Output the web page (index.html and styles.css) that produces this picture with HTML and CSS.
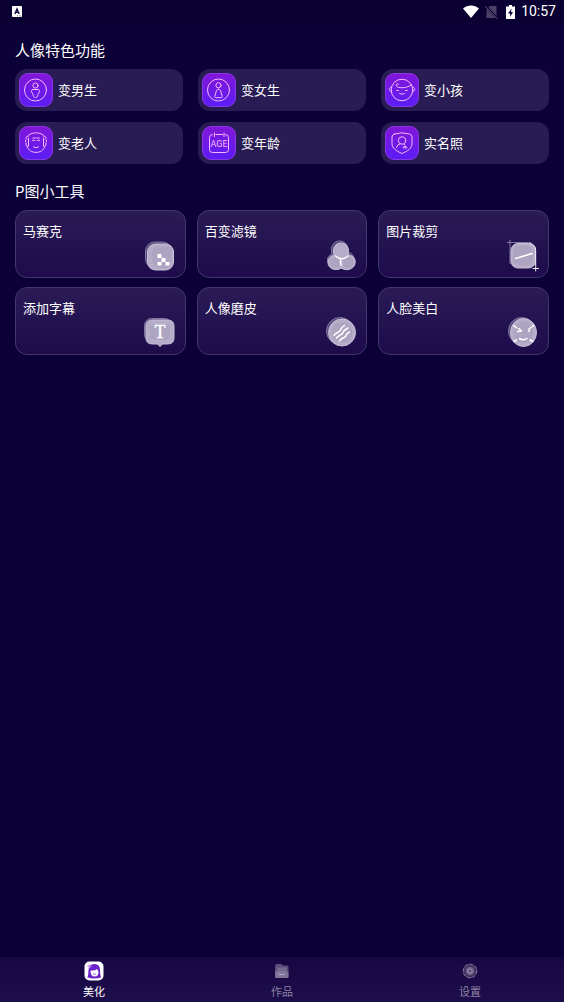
FILE: index.html
```html
<!DOCTYPE html>
<html lang="zh-CN">
<head>
<meta charset="utf-8">
<meta name="viewport" content="width=device-width, initial-scale=1">
<title>美化</title>
<link rel="stylesheet" href="styles.css">
</head>
<body>
<div class="app">
  <header class="status">
    <svg class="status-app" viewBox="0 0 10 11" aria-hidden="true"><rect width="10" height="11" rx="1" fill="#fff"/><path d="M2.800 8 5 3l2.200 5M3.600 6.400h2.800" fill="none" stroke="#0b0136" stroke-width="1.400"/><path d="M5 9.800h1M7.500 9.800h1" stroke="#0b0136" stroke-width=".7"/></svg>
    <div class="status-right">
      <svg class="wifi" viewBox="0 0 16 13" aria-hidden="true"><path d="M0 3.400C4.500-.6 11.500-.6 16 3.400L8 13z" fill="#fff"/></svg>
      <svg class="sim" viewBox="0 0 13 14" aria-hidden="true"><path d="M5 1h6.500v12h-10V4.500z" fill="#4a4169"/><path d="M.5 1 12.500 13.500" stroke="#0b0136" stroke-width="2.400"/><path d="M.5 1.500 12 13.500" stroke="#6a6284" stroke-width="1"/></svg>
      <svg class="battery" viewBox="0 0 9 14" aria-hidden="true"><path d="M3 0h3v1.500h3V14H0V1.500h3z" fill="#fff"/><path d="M5.500 3.500 2 8.400h2.200V12L7 7H5z" fill="#0b0136"/></svg>
      <time class="clock">10:57</time>
    </div>
  </header>

  <main class="content">
    <h2 class="heading">人像特色功能</h2>
    <div class="features">
      <button class="feature" type="button">
        <span class="tile"><svg viewBox="0 0 34 34" aria-hidden="true"><circle cx="16.500" cy="17" r="11"/><circle cx="16.500" cy="12.500" r="2.600"/><path d="M14 16.500h5c1.400 0 1.800 1 1.500 2.200-.3 1.300-1.300 1.600-1.600 3-.2 1.800-1 2.800-2.400 2.800s-2.200-1-2.400-2.800c-.3-1.400-1.300-1.700-1.600-3-.3-1.200.1-2.200 1.500-2.200z"/></svg></span>
        <span>变男生</span>
      </button>
      <button class="feature" type="button">
        <span class="tile"><svg viewBox="0 0 34 34" aria-hidden="true"><circle cx="16.500" cy="17" r="11"/><circle cx="16.500" cy="12.300" r="2.600"/><path d="M16.500 16.300c-1.600 0-2.200 1.200-2.500 2.800l-1.200 4.200c-.2.900.2 1.400 1.200 1.400h5c1 0 1.400-.5 1.200-1.400l-1.200-4.200c-.3-1.600-.9-2.800-2.500-2.800z"/></svg></span>
        <span>变女生</span>
      </button>
      <button class="feature" type="button">
        <span class="tile"><svg viewBox="0 0 34 34" aria-hidden="true"><circle cx="17" cy="17" r="10.800"/><path d="M6.300 14c-2.800.3-2.800 4.200 0 4.500M27.700 14c2.800.3 2.800 4.200 0 4.500M13.500 11.200c-1.500-.8-3 .3-2.200 1.800 1.700 2.600 11.500 2.400 15.200-1.300M11.800 17.500h1.700M20.500 17.500h1.700M14.500 20.500q2.500 1.800 5 0"/></svg></span>
        <span>变小孩</span>
      </button>
      <button class="feature" type="button">
        <span class="tile"><svg viewBox="0 0 34 34" aria-hidden="true"><path d="M8.500 10.500C11 5.500 23 5.500 25.500 10.500M8 20.500c2.500 8 15.500 8 18 0M9.500 12v8M24.500 12v8M9.300 10.200c-2.300 0-3 1.900-1.600 3-1.700.8-1.700 2.800-.4 3.500-1 1.500-.2 3.600 1.600 3.800M24.700 10.200c2.300 0 3 1.900 1.600 3 1.700.8 1.700 2.800.4 3.500 1 1.500.2 3.600-1.600 3.800"/><path d="M13.800 12h2.700M17.700 12h2.700M13.500 14.500q1.200-.8 2.500 0M18.200 14.500q1.200-.8 2.500 0M14.500 21q2.500 1.700 5 0"/></svg></span>
        <span>变老人</span>
      </button>
      <button class="feature" type="button">
        <span class="tile"><svg viewBox="0 0 34 34" aria-hidden="true"><path d="M10.500 8.500Q7.500 8.500 7.500 11.500v12q0 3 3 3h13q3 0 3-3v-12q0-3-3-3M14 8.500h6.500M12.500 7v3.500M22 7v3.500"/><text class="age" x="17" y="21" text-anchor="middle">AGE</text></svg></span>
        <span>变年龄</span>
      </button>
      <button class="feature" type="button">
        <span class="tile"><svg viewBox="0 0 34 34" aria-hidden="true"><path d="M9.500 8Q17 5.500 24.500 8q2.500.7 2.500 3v6.500c0 5-4.500 7.500-10 10-5.500-2.500-10-5-10-10V11q0-2.300 2.500-3z"/><circle cx="17" cy="14.500" r="3.700"/><path d="M11.500 21.500q.5-3.300 3.500-3.600M19 18l1 1M19 20.500h2M18 21.800h4"/></svg></span>
        <span>实名照</span>
      </button>
    </div>

    <h2 class="heading heading-tools">P图小工具</h2>
    <div class="tools">
      <button class="tool" type="button">
        <span>马赛克</span>
        <svg class="tool-icon" viewBox="0 0 36 36" aria-hidden="true"><rect class="ghost" x="2.500" y="4" width="26" height="26" rx="9"/><rect class="body" x="4.500" y="6" width="26" height="26" rx="8"/><path class="shade" d="M12 8h14q3 0 3 3v13q0 7-8 7-13 0-13-12 0-8 4-11z"/><path d="M14.500 16h4v4h4v4h4v3.500h-4V24h-4v3.500h-4V24h4v-4h-4z" fill="#fff"/></svg>
      </button>
      <button class="tool" type="button">
        <span>百变滤镜</span>
        <svg class="tool-icon" viewBox="0 0 36 36" aria-hidden="true"><path class="ghost" d="M8 16C6 8 10 3 15.500 3s9 4 8 11c5 1 8 5 6 11-2 6-10 8-14 4-5 2-12-1-12-7 0-3 2-5 4.500-6z"/><path class="body" d="M10 17C8 10 11.500 5 17 5s9 5 7 12c5 0 8 4 7 8.500-1 6-9 8-13.500 4.500C12 33.500 4 31 4 24.500 4 20 7 18 10 17z"/><circle class="shade" cx="11" cy="24.500" r="6"/><circle class="shade" cx="24" cy="24.500" r="6"/><path class="mark" d="M11.700 18q6 5.500 12.300 0M16.500 20.500q-.5 3 .7 6.500"/></svg>
      </button>
      <button class="tool" type="button">
        <span>图片裁剪</span>
        <svg class="tool-icon" viewBox="0 0 36 36" aria-hidden="true"><path class="ghost" d="M1 4.500h24M4 2v24"/><rect class="body" x="5" y="5.500" width="24.500" height="24.500" rx="7"/><path class="shade" d="M10 7q14-1 16 3l1 11q-1 6-7 7-13 1-14-7 0-11 4-14z"/><path class="crop-edge" d="M24 5.500q5.700 1 5.700 7V33M27 30.500h5.500"/><path class="mark" d="M9.500 20.500 26 15.500"/></svg>
      </button>
      <button class="tool" type="button">
        <span>添加字幕</span>
        <svg class="tool-icon" viewBox="0 0 36 36" aria-hidden="true"><rect class="ghost" x="1.500" y="3.500" width="27" height="23" rx="7"/><path class="body" d="M9.500 5h15q6.500 0 6.500 6v12q0 6-6.500 6h-5L17 31.500 14.500 29h-5Q3 29 3 23V11q0-6 6.500-6z"/><rect class="shade" x="6.500" y="8.500" width="21" height="17" rx="4"/><text class="letter" x="17" y="23" text-anchor="middle">T</text></svg>
      </button>
      <button class="tool" type="button">
        <span>人像磨皮</span>
        <svg class="tool-icon" viewBox="0 0 36 36" aria-hidden="true"><circle class="ghost" cx="16" cy="16" r="13.500"/><circle class="body" cx="18" cy="17.500" r="13.500"/><circle class="shade" cx="18" cy="17.500" r="11"/><path class="mark" d="M10 20.500q1-2 4.500-3.500 2-1 2.500-3 .5-1.500 3.500-3.500M12.500 23q1-1.500 4.500-3.500 2-1 2.500-3 .5-1 4.500-3.500M15.500 26q1-2 4.500-3.500 2-1 2.500-3 1-1.500 3-2.500"/></svg>
      </button>
      <button class="tool" type="button">
        <span>人脸美白</span>
        <svg class="tool-icon" viewBox="0 0 36 36" aria-hidden="true"><ellipse class="ghost" cx="15.500" cy="16" rx="13" ry="13.500"/><ellipse class="body" cx="17.500" cy="17.500" rx="13" ry="14"/><ellipse class="shade" cx="17.500" cy="17.500" rx="10.500" ry="11.500"/><path class="mark" d="M7.500 10.500 11 13M13 13.500l2.500 2.500-4 .5M23 16.500V14l2-1.500M26 11.500l2-1M8 26.500l2.500-1.500M13.500 23.500q4 2.500 7.500 0M24 25l3 1.500"/></svg>
      </button>
    </div>
  </main>

  <nav class="tabs">
    <a class="tab tab-active" href="#beautify" aria-current="page">
      <svg viewBox="0 0 20 20" aria-hidden="true"><rect x=".5" y=".5" width="19" height="19" rx="5" fill="#fff"/><path d="M3.500 16.500Q4.500 14 4.500 9 4.500 3 10.500 3 16 3 16 9q0 5 1 7.500-6.500 2-13.500 0z" fill="#6a22c9"/><path d="M6.500 9.500q4.500.5 6.500-1.500 1.200 1.500 1.500 3 0 4.500-4 4.500t-4-6z" fill="#fff"/><path d="M9 12.800q1.500 1 3 0" stroke="#b45be0" fill="none"/><path d="m5.500 2.500.8 2 2 .8-2 .8-.8 2-.8-2-2-.8 2-.8z" fill="#c58bef"/></svg>
      <span>美化</span>
    </a>
    <a class="tab" href="#works">
      <svg viewBox="0 0 20 20" aria-hidden="true"><path d="M3 5q0-2 2-2h4l2 1.500h4q1.500 0 1.500 1.500v9.500Q16.500 17 15 17H4.500Q3 17 3 15.500z" fill="#5b4d7d"/><rect x="5" y="6.500" width="9.500" height="6" fill="#75698f"/><path d="M3 10.500h13.500v5q0 1.500-1.500 1.500H4.500Q3 17 3 15.500z" fill="#8a7fa3" opacity=".75"/><path d="M6.500 13.500h6.500" stroke="#b5adc6" stroke-width="1"/></svg>
      <span>作品</span>
    </a>
    <a class="tab" href="#settings">
      <svg viewBox="0 0 20 20" aria-hidden="true"><circle cx="10" cy="10" r="6.800" fill="#40325f" stroke="#5d5079" stroke-width="1"/><circle cx="10" cy="10" r="6.800" fill="none" stroke="#887ca0" stroke-width="1" stroke-dasharray="2.400 2.940"/><circle cx="10" cy="10" r="4.300" fill="#6e628a"/><circle cx="10" cy="10" r="2" fill="#51446f" stroke="#9f96b4" stroke-width="1"/></svg>
      <span>设置</span>
    </a>
  </nav>
</div>
</body>
</html>
```
FILE: styles.css
```css
* { box-sizing: border-box; }

body {
  margin: 0;
  background: #0b0037;
  color: #fff;
  font-family: "Noto Sans CJK SC", sans-serif;
}

button {
  border: 0;
  color: inherit;
  font: inherit;
  text-align: left;
}

.app {
  display: flex;
  flex-direction: column;
  min-height: 100vh;
}

.status {
  display: flex;
  align-items: center;
  justify-content: space-between;
  height: 23px;
  padding: 0 8px 0 12px;
  background: #0a0032;
}

.status-right {
  display: flex;
  align-items: center;
}

.status-app { width: 10px; height: 11px; }
.wifi { width: 16px; height: 13px; margin-right: 6px; }
.sim { width: 13px; height: 14px; margin-right: 8px; }
.battery { width: 9px; height: 14px; margin-right: 6px; }

.clock {
  font: 400 14px/23px Roboto, sans-serif;
}

.content {
  flex: 1;
  padding: 16px 15px;
}

.heading {
  margin: 0 0 8px;
  font-size: 15px;
  font-weight: 400;
  line-height: 22px;
}

.heading-tools { margin-top: 16px; }

.features {
  display: grid;
  grid-template-columns: repeat(3, 1fr);
  gap: 11px 15px;
}

.feature {
  display: flex;
  align-items: center;
  gap: 5px;
  height: 42px;
  padding: 0 4px 1px;
  border-radius: 12px;
  background: #291b53;
  font-size: 13px;
}

.tile {
  display: flex;
  width: 34px;
  height: 34px;
  border: 1px solid #8a35e6;
  border-radius: 9px;
  background: linear-gradient(#8216d8, #5c1df5);
}

.tile svg {
  flex: none;
  width: 34px;
  height: 34px;
  margin: -1px;
  fill: none;
  stroke: #f3b9fb;
  stroke-width: 1;
  stroke-linecap: round;
  stroke-linejoin: round;
}

.tile .age {
  fill: #f3b9fb;
  stroke: none;
  font: 400 9px Roboto, sans-serif;
}

.tools {
  display: grid;
  grid-template-columns: repeat(3, 1fr);
  gap: 9px 11px;
}

.tool {
  display: flex;
  justify-content: space-between;
  height: 68px;
  padding: 10px 6px 3px 7px;
  border: 1px solid #43366c;
  border-radius: 12px;
  background: linear-gradient(#2a1b56, #1d0b4b);
  font-size: 13px;
  line-height: 20px;
}

.tool-icon {
  flex: none;
  align-self: flex-end;
  width: 36px;
  height: 36px;
  margin-left: -16px;
}

.ghost {
  fill: #54477b;
  stroke: #8378a2;
  stroke-width: 1;
}

.body {
  fill: #b5acc9;
  stroke: #c8c1d8;
  stroke-width: 1;
}

.shade {
  fill: #a79dbc;
  stroke: #bdb4cd;
  stroke-width: 1;
  opacity: 0.5;
}

.mark, .crop-edge {
  fill: none;
  stroke: #fff;
  stroke-width: 1.5;
  stroke-linecap: round;
  stroke-linejoin: round;
}

.crop-edge {
  stroke: #eeeaf5;
  stroke-width: 1;
}

.letter {
  fill: #fff;
  stroke: #fff;
  stroke-width: 0.4;
  font: 400 18px "Liberation Serif", serif;
}

.tabs {
  position: sticky;
  bottom: 0;
  display: grid;
  grid-template-columns: repeat(3, 1fr);
  height: 45px;
  background: linear-gradient(#160743, #1e0d4b);
}

.tab {
  display: flex;
  flex-direction: column;
  align-items: center;
  padding-top: 4px;
  color: #8d83a3;
  font-size: 11px;
  line-height: 20px;
  text-decoration: none;
}

.tab svg {
  width: 20px;
  height: 20px;
}

.tab-active { color: #fff; }
```
